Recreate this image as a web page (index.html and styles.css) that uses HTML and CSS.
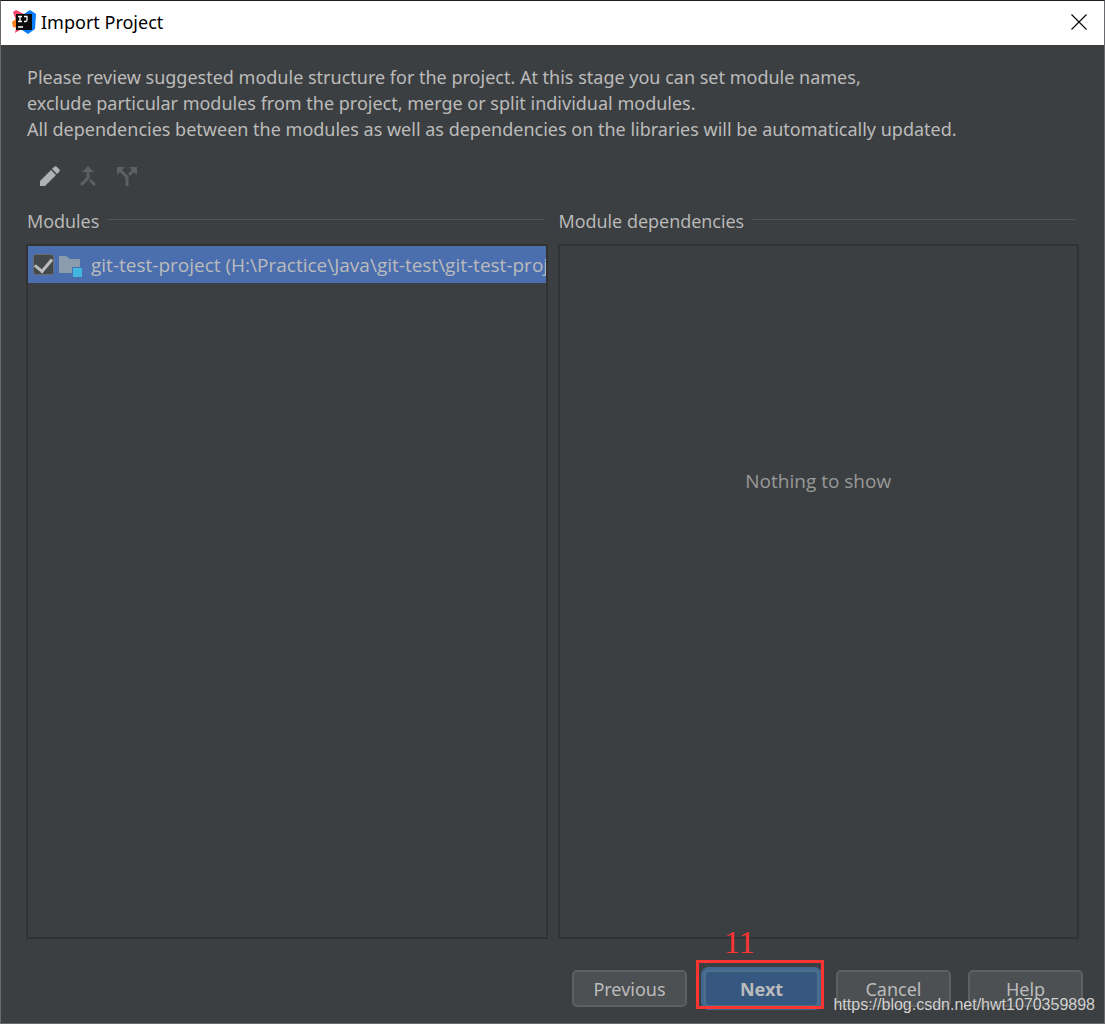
FILE: index.html
```html
<!DOCTYPE html>
<html lang="en">
<head>
<meta charset="utf-8">
<title>Import Project</title>
<link rel="stylesheet" href="styles.css">
</head>
<body>
<div class="window">
  <header class="titlebar">
    <svg class="logo" viewBox="0 0 24 24" aria-hidden="true">
      <path d="M1 2 4 0 14 5 8 20 3 23 5 13z" fill="#f4476b"/>
      <path d="M0 12 5 8v10l-4-1z" fill="#fc801d"/>
      <path d="M12 4 18 0 24 4 23 19 16 24 10 20z" fill="#087cfa"/>
      <path d="M4 4h16v16H4z" fill="#0c0c0c"/>
      <path d="M6 6.500h4M8 6.500v5M6 11.500h4M12 6.500h3v3.500q0 1.500-1.500 1.500H12M6 17h5" fill="none" stroke="#fff" stroke-width="1.300"/>
    </svg>
    <h1 class="title">Import Project</h1>
    <button class="close" type="button" aria-label="Close">
      <svg viewBox="0 0 16 16" width="16" height="16"><path d="M.5.5l15 15M15.5.5l-15 15" stroke="#000" stroke-width="1.1"/></svg>
    </button>
  </header>
  <main class="content">
    <p class="intro">Please review suggested module structure for the project. At this stage you can set module names,<br>exclude particular modules from the project, merge or split individual modules.<br>All dependencies between the modules as well as dependencies on the libraries will be automatically updated.</p>
    <div class="toolbar">
      <button class="tool" type="button" aria-label="Rename">
        <svg viewBox="0 0 22 22"><path d="M2 21v-5L13 5l5 5L7 21zM14 4l2-2q1.500-1.500 3 0l2 2q1.500 1.500 0 3l-2 2z" fill="#afb1b3"/></svg>
      </button>
      <button class="tool" type="button" aria-label="Merge" disabled>
        <svg viewBox="0 0 22 22"><path d="M11 1l6 6H5z" fill="#5d5f61"/><path d="M11 6v7l-7 7M13 15l5 5" fill="none" stroke="#5d5f61" stroke-width="3"/></svg>
      </button>
      <button class="tool" type="button" aria-label="Split" disabled>
        <svg viewBox="0 0 22 22"><path d="M1 2h8L1 10zM21 2h-8l8 8z" fill="#5d5f61"/><path d="M4 5l7 7v9M13 10l5-5" fill="none" stroke="#5d5f61" stroke-width="3"/></svg>
      </button>
    </div>
    <div class="panels">
      <section class="panel">
        <h2 class="legend">Modules</h2>
        <div class="list">
          <label class="row">
            <input class="check" type="checkbox" checked>
            <svg class="folder" viewBox="0 0 24 22"><path d="M1 1h7l4 3h10v8h-8v6H1z" fill="#8b9cae"/><path d="M15 13h9v9h-9z" fill="#40b6e0"/></svg>
            <span>git-test-project (H:\Practice\Java\git-test\git-test-project)</span>
          </label>
        </div>
      </section>
      <section class="panel">
        <h2 class="legend">Module dependencies</h2>
        <div class="list"><p class="empty">Nothing to show</p></div>
      </section>
    </div>
  </main>
  <footer class="actions">
    <button class="btn" type="button">Previous</button>
    <div class="marked">
      <button class="btn primary" type="button">Next</button>
      <span class="frame"></span>
      <span class="step">11</span>
    </div>
    <button class="btn" type="button">Cancel</button>
    <button class="btn" type="button">Help</button>
  </footer>
  <span class="watermark">https://blog.csdn.net/hwt1070359898</span>
</div>
</body>
</html>
```
FILE: styles.css
```css
* { box-sizing: border-box; }
body {
  margin: 0;
  font: 18px/26px "Noto Sans", "Open Sans", sans-serif;
  color: #bbb;
  background: #3c3f41;
}
h1, h2, p { margin: 0; font-weight: 400; }
button { font: inherit; color: inherit; }
.window {
  position: relative;
  display: flex;
  flex-direction: column;
  min-height: 100vh;
  border: 1px solid #69696b;
  border-top-color: #1c1b20;
}
.titlebar {
  display: flex;
  align-items: center;
  height: 44px;
  padding: 0 10px 2px 11px;
  background: #fff;
  color: #000;
}
.logo { width: 24px; height: 24px; margin-right: 5px; }
.title { flex: 1; font-size: 18px; }
.close {
  display: grid;
  place-items: center;
  width: 30px;
  height: 30px;
  padding: 0;
  border: 0;
  background: none;
}
.content {
  flex: 1;
  display: flex;
  flex-direction: column;
  padding: 19px 25px 0;
}
.intro { padding-left: 1px; white-space: nowrap; }
.toolbar { display: flex; gap: 17px; padding: 23px 0 0 12px; }
.tool {
  width: 22px;
  height: 22px;
  padding: 0;
  border: 0;
  background: none;
}
.tool svg { display: block; width: 22px; height: 22px; }
.panels {
  flex: 1;
  display: grid;
  grid-template-columns: minmax(0, 1fr) minmax(0, 1fr);
  gap: 10px;
  padding-top: 21px;
}
.panel { display: flex; flex-direction: column; }
.legend {
  display: flex;
  align-items: center;
  gap: 8px;
  padding: 0 4px 0 1px;
  margin-bottom: 10px;
  font-family: "Open Sans", "Noto Sans", sans-serif;
  font-size: 18px;
}
.legend::after { content: ""; flex: 1; border-top: 1px solid #515355; margin-bottom: 3px; }
.list { flex: 1; border: 2px solid #323232; overflow: hidden; }
.row {
  display: flex;
  align-items: center;
  height: 37px;
  padding-left: 5px;
  background: #4b6eaf;
  font-family: "Open Sans", "Noto Sans", sans-serif;
  font-size: 19px;
  white-space: nowrap;
}
.check {
  appearance: none;
  flex: none;
  display: grid;
  place-items: center;
  width: 21px;
  height: 21px;
  margin: 0;
  border: 1px solid #6b6b6b;
  border-radius: 3px;
  background: #43494a;
}
.check:checked::after {
  content: "";
  width: 8px;
  height: 14px;
  margin-bottom: 4px;
  border: solid #bbb;
  border-width: 0 3px 3px 0;
  rotate: 40deg;
}
.folder { flex: none; width: 24px; height: 22px; margin: 2px 9px 0 4px; }
.empty {
  padding-top: 222px;
  font-family: "Open Sans", "Noto Sans", sans-serif;
  font-size: 19px;
  text-align: center;
  color: #999;
}
.actions {
  display: flex;
  justify-content: flex-end;
  gap: 17px;
  padding: 31px 21px 16px;
}
.btn {
  width: 115px;
  height: 37px;
  padding: 0;
  border: 2px solid #5e6060;
  border-radius: 5px;
  background: #4c5052;
}
.primary {
  display: block;
  border-color: #4c708c;
  background: #365880;
  box-shadow: 0 0 0 3px #43688f;
  font-weight: 700;
}
.marked { position: relative; }
.frame {
  position: absolute;
  inset: -10px -5px -2px -8px;
  border: 3px solid #fc3432;
  pointer-events: none;
}
.step {
  position: absolute;
  left: 20px;
  bottom: 49px;
  color: #fc3432;
  font: 32px/32px "Liberation Serif", serif;
}
.watermark {
  position: absolute;
  right: 9px;
  bottom: 8px;
  font: 16px/20px "Liberation Sans", Arial, sans-serif;
  color: #d2d2d2;
  text-shadow: 0 1px 1px #444;
}
```
